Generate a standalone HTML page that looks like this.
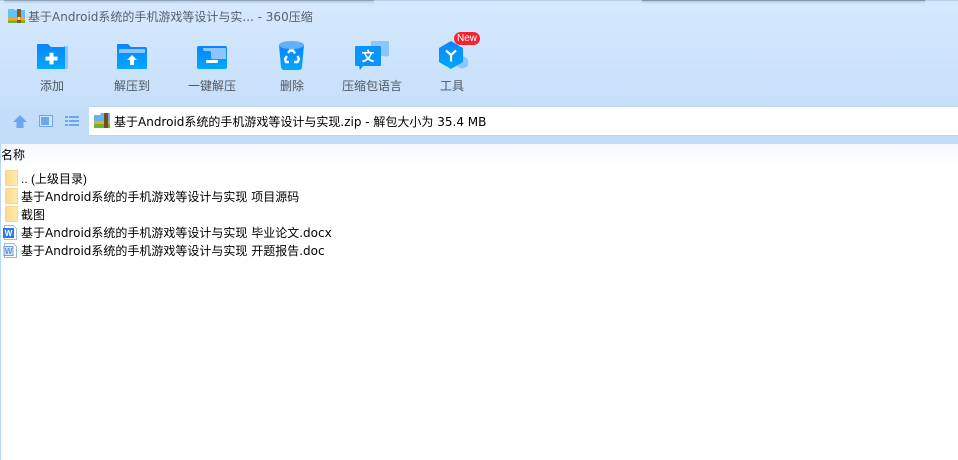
<!DOCTYPE html>
<html><head><meta charset="utf-8">
<style>
html,body{margin:0;padding:0}
body{width:958px;height:460px;overflow:hidden;background:#fff;position:relative;font-family:"DejaVu Sans","Noto Sans CJK SC",sans-serif;font-size:12px;color:#000}
.a{position:absolute;white-space:nowrap}
#top{left:0;top:0;width:958px;height:107px;background:linear-gradient(#d5e9fe,#c6dff9)}
#line{left:0;top:0;width:958px;height:1px;background:#b9cfe6}
#sh1{left:4px;top:0;width:370px;height:1px;background:#8ea3b8;box-shadow:0 1px 2px #8ea3b8}
#sh2{left:642px;top:0;width:283px;height:1px;background:#7f94a8;box-shadow:0 1px 2px #8ea3b8}
#bar{left:0;top:107px;width:958px;height:37px;background:#c3dcf8}
#addr{left:89px;top:107px;width:869px;height:28px;background:#fff;box-shadow:0 -1px 0 #bcd6f2,0 1px 0 #bcd6f2}
#hdr{left:1px;top:144px;width:957px;height:24px;background:linear-gradient(#f3f9fe,#fff)}
#left{left:0;top:144px;width:1px;height:316px;background:#b6d7fb}
.t{color:#4f5863;font-size:12px;line-height:14px;top:79px}
.title{color:#56606c;font-size:12px;line-height:16px}
.r{left:21px;font-size:12px;line-height:16px;color:#000}
.f{left:5px;width:13px;height:16px;border:1px solid #f3d88f;box-sizing:border-box;border-radius:1px;background:linear-gradient(90deg,#fbdc8c,#fee9ad)}
</style></head><body>
<div class="a" id="top"></div>
<div class="a" id="line"></div>
<div class="a" id="sh1"></div><div class="a" id="sh2"></div>
<svg class="a" style="left:8px;top:9px" width="17" height="14" viewBox="0 0 17 14">
<path d="M0 1a1 1 0 0 1 1-1h5l1 1h10v8H0z" fill="#63c2f4"/><rect y="9" width="17" height="2.500" fill="#f4a62a"/><rect y="11.500" width="17" height="2.500" fill="#6eb52e"/><rect x="9" y="0" width="4" height="14" fill="#8a5a1e"/><rect x="9.500" y="8" width="3" height="3" fill="#f7d774"/></svg>
<div class="a title" style="left:28px;top:9px">基于Android系统的手机游戏等设计与实... - 360压缩</div>

<svg class="a" style="left:36px;top:43px" width="33" height="27" viewBox="0 0 33 27">
<defs><linearGradient id="g" x1="0" y1="0" x2="0" y2="1"><stop offset="0" stop-color="#0a84fd"/><stop offset="1" stop-color="#00a8ff"/></linearGradient></defs>
<path d="M28 3h3a1 1 0 0 1 1 1v21a1 1 0 0 1-1 1h-3z" fill="#8cc6fd"/>
<path d="M1 2a1 1 0 0 1 1-1h10l3 3h14v22H2a1 1 0 0 1-1-1z" fill="url(#g)"/>
<path d="M14 10h4v4h4v4h-4v4h-4v-4h-4v-4h4z" transform="translate(-.5 0) scale(1 .97)" fill="#fff"/></svg>

<svg class="a" style="left:116px;top:43px" width="32" height="27" viewBox="0 0 32 27">
<path d="M1 2a1 1 0 0 1 1-1h10l3 3h14a2 2 0 0 1 2 2v19a1 1 0 0 1-1 1H2a1 1 0 0 1-1-1z" fill="url(#g)"/>
<path d="M3 7a1 1 0 0 1 1-1h24a1 1 0 0 1 1 1v3H3z" fill="#8cc6fd"/>
<path d="M16 12l5 5h-3v5h-4v-5h-3z" fill="#fff"/></svg>

<svg class="a" style="left:196px;top:45px" width="32" height="25" viewBox="0 0 32 25">
<rect x="1" y="1" width="30" height="23" rx="2" fill="url(#g)"/>
<path d="M7 3h22a1 1 0 0 1 1 1v10H17a2 2 0 0 1-2-2V8a2 2 0 0 0-2-2H9a2 2 0 0 1-2-2z" fill="#8cc6fd"/>
<rect x="10" y="15" width="12" height="3" rx="1" fill="#fff"/></svg>

<svg class="a" style="left:279px;top:40px" width="26" height="31" viewBox="0 0 26 31">
<path d="M0 5h25l-2 22a3 3 0 0 1-3 3H5a3 3 0 0 1-3-3z" fill="url(#g)"/>
<ellipse cx="12.500" cy="5" rx="12.500" ry="4" fill="#5fb1fd"/>
<g fill="none" stroke="#fff" stroke-width="2.400"><path d="M9 13l2-2.500h3l2 3"/><path d="M18.500 16l1.500 3-1.500 3H15"/><path d="M10 22H7l-1-3 2-3"/></g></svg>

<svg class="a" style="left:354px;top:40px" width="36" height="31" viewBox="0 0 36 31">
<path d="M17 2a1 1 0 0 1 1-1h16a1 1 0 0 1 1 1v14h-2v1l-3-1H17z" fill="#8cc6fd"/>
<path d="M2 6h24a1 1 0 0 1 1 1v18a1 1 0 0 1-1 1H9l-3 4-1-4H2a1 1 0 0 1-1-1V7a1 1 0 0 1 1-1z" fill="#0a92fd"/>
<text x="14" y="21" font-size="13" font-weight="bold" fill="#fff" text-anchor="middle" font-family="'Noto Sans CJK SC',sans-serif">文</text></svg>

<svg class="a" style="left:438px;top:40px" width="32" height="30" viewBox="0 0 32 30">
<path d="M25 16l5 3v7l-6 3-5-3z" fill="#8cc6fd"/>
<path d="M13 1l12 7v14l-12 7L1 22V8z" fill="url(#g)"/>
<path d="M8 10.500l5 4.500 5-4.500M13 15v6.500" fill="none" stroke="#fff" stroke-width="2.200"/></svg>
<div class="a" style="left:454px;top:32px;width:26px;height:13px;border-radius:7px;background:#f5222f;color:#fff;font-family:'Liberation Sans',sans-serif;font-size:10px;line-height:13px;text-align:center">New</div>

<div class="a t" style="left:40px">添加</div>
<div class="a t" style="left:114px">解压到</div>
<div class="a t" style="left:188px">一键解压</div>
<div class="a t" style="left:280px">删除</div>
<div class="a t" style="left:342px">压缩包语言</div>
<div class="a t" style="left:440px">工具</div>

<div class="a" id="bar"></div>
<div class="a" id="addr"></div>
<svg class="a" style="left:13px;top:115px" width="14" height="13" viewBox="0 0 14 13"><path d="M7 0l7 7h-3.500v6h-7V7H0z" fill="#6ca6ee"/></svg>
<svg class="a" style="left:39px;top:115px" width="14" height="12" viewBox="0 0 14 12"><rect x=".5" y=".5" width="13" height="11" fill="#d3e5fb" stroke="#6ca6ee"/><rect x="2" y="2" width="8" height="8" fill="#6ca6ee"/></svg>
<svg class="a" style="left:65px;top:115px" width="15" height="12" viewBox="0 0 15 12"><path d="M0 1h3v2H0zM0 5h3v2H0zM0 9h3v2H0zM4 1h10v2H4zM4 5h10v2H4zM4 9h10v2H4z" fill="#6ca6ee"/></svg>
<svg class="a" style="left:94px;top:113px" width="16" height="15" viewBox="0 0 16 15"><path d="M0 2h6l1-2h9v8H0z" fill="#63b6ea"/><rect y="8" width="16" height="3" fill="#f4a62a"/><rect y="11" width="16" height="4" fill="#6eb52e"/><rect x="10" y="0" width="4" height="15" fill="#7a4a1e"/></svg>
<div class="a" style="left:114px;top:114px;font-size:12px;line-height:16px">基于Android系统的手机游戏等设计与实现.zip - 解包大小为 35.4 MB</div>

<div class="a" id="hdr"></div>
<div class="a" id="left"></div>
<div class="a" style="left:1px;top:148px;font-size:12px;line-height:15px">名称</div>

<div class="a f" style="top:170px"></div>
<div class="a f" style="top:188px"></div>
<div class="a f" style="top:206px"></div>
<svg class="a" style="left:3px;top:225px" width="14" height="15" viewBox="0 0 14 15"><path d="M1.500.5h9l3 3v11h-12z" fill="#fff" stroke="#a8bcd4"/><rect x="0" y="3" width="11" height="10" fill="#2f7bdc"/><text x="5.500" y="11" font-family="Liberation Sans" font-size="8" font-weight="bold" fill="#fff" text-anchor="middle">W</text></svg>
<svg class="a" style="left:3px;top:243px" width="14" height="15" viewBox="0 0 14 15"><path d="M1.500.5h9l3 3v11h-12z" fill="#fff" stroke="#9fb4cf"/><rect x="1" y="3.500" width="9" height="9" fill="#d8e6f8" stroke="#6b9fe4"/><text x="5.500" y="11" font-family="Liberation Sans" font-size="8" font-weight="bold" fill="#5a94e0" text-anchor="middle">W</text></svg>

<div class="a r" style="top:171px;font-family:'Liberation Sans','Noto Sans CJK SC',sans-serif">.. (上级目录)</div>
<div class="a r" style="top:189px">基于Android系统的手机游戏等设计与实现 项目源码</div>
<div class="a r" style="top:207px">截图</div>
<div class="a r" style="top:225px">基于Android系统的手机游戏等设计与实现 毕业论文.docx</div>
<div class="a r" style="top:243px">基于Android系统的手机游戏等设计与实现 开题报告.doc</div>
</body></html>
